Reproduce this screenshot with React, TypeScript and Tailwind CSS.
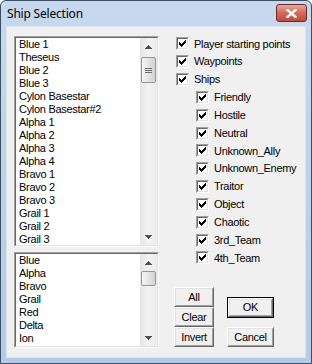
import React from "react";

const topItems = [
  "Blue 1",
  "Theseus",
  "Blue 2",
  "Blue 3",
  "Cylon Basestar",
  "Cylon Basestar#2",
  "Alpha 1",
  "Alpha 2",
  "Alpha 3",
  "Alpha 4",
  "Bravo 1",
  "Bravo 2",
  "Bravo 3",
  "Grail 1",
  "Grail 2",
  "Grail 3",
];

const bottomItems = ["Blue", "Alpha", "Bravo", "Grail", "Red", "Delta", "Ion", "Kilo"];

const teams = [
  "Friendly",
  "Hostile",
  "Neutral",
  "Unknown_Ally",
  "Unknown_Enemy",
  "Traitor",
  "Object",
  "Chaotic",
  "3rd_Team",
  "4th_Team",
];

// 7x7 pixel check, one 3px column per x
const checkCols = [2, 3, 4, 3, 2, 1, 0];

function Arrow({ down }: { down?: boolean }) {
  return (
    <div className="h-[17px] flex items-center justify-center">
      <svg width="7" height="4" viewBox="0 0 7 4" shapeRendering="crispEdges">
        {down ? (
          <polygon points="0,0 7,0 3.5,4" fill="#505050" />
        ) : (
          <polygon points="0,4 7,4 3.5,0" fill="#505050" />
        )}
      </svg>
    </div>
  );
}

function ScrollBar({ thumbTop, thumbHeight, grip }: { thumbTop: number; thumbHeight: number; grip?: boolean }) {
  return (
    <div className="w-[17px] h-full flex flex-col bg-gradient-to-r from-[#e6e6e6] via-[#f2f2f2] to-[#ececec]">
      <Arrow />
      <div
        className="mx-[1px] rounded-[2px] border border-[#979797] bg-gradient-to-r from-[#f6f6f6] via-[#e4e4e4] to-[#d2d2d2] flex flex-col items-center justify-center gap-[1px]"
        style={{ marginTop: thumbTop, height: thumbHeight }}
      >
        {grip && (
          <>
            <div className="w-[7px] h-[1px] bg-[#6e6e6e]" />
            <div className="w-[7px] h-[1px] bg-[#6e6e6e]" />
            <div className="w-[7px] h-[1px] bg-[#6e6e6e]" />
          </>
        )}
      </div>
      <div className="flex-1" />
      <Arrow down />
    </div>
  );
}

function ListBox({
  items,
  height,
  thumbTop,
  thumbHeight,
  grip,
}: {
  items: string[];
  height: number;
  thumbTop: number;
  thumbHeight: number;
  grip?: boolean;
}) {
  return (
    <div
      className="border border-t-[#a0a0a0] border-l-[#a0a0a0] border-b-white border-r-white"
      style={{ height }}
    >
      <div className="h-full border border-t-[#696969] border-l-[#696969] border-b-[#e3e3e3] border-r-[#e3e3e3] bg-white flex">
        <div className="flex-1 overflow-hidden pl-[3px]">
          {items.map((it) => (
            <div key={it} className="h-[13px] leading-[13px] whitespace-nowrap">
              {it}
            </div>
          ))}
        </div>
        <ScrollBar thumbTop={thumbTop} thumbHeight={thumbHeight} grip={grip} />
      </div>
    </div>
  );
}

function CheckBox({ label, indent }: { label: string; indent?: boolean }) {
  return (
    <div className={`h-[17.83px] flex items-center gap-[5px] ${indent ? "pl-[22px]" : "pl-[2px]"}`}>
      <div className="w-[13px] h-[13px] border border-t-[#a0a0a0] border-l-[#a0a0a0] border-b-white border-r-white">
        <div className="w-full h-full border border-t-[#696969] border-l-[#696969] border-b-[#e3e3e3] border-r-[#e3e3e3] bg-white flex items-center justify-center">
          <svg width="7" height="7" viewBox="0 0 7 7" shapeRendering="crispEdges">
            {checkCols.map((y, x) => (
              <rect key={x} x={x} y={y} width="1" height="3" fill="#000" />
            ))}
          </svg>
        </div>
      </div>
      <span className="whitespace-nowrap">{label}</span>
    </div>
  );
}

function Button({ label, w, h, isDefault }: { label: string; w: number; h: number; isDefault?: boolean }) {
  const inner = (
    <div className="h-full border border-t-white border-l-white border-b-[#696969] border-r-[#696969]">
      <div className="h-full border border-t-[#e3e3e3] border-l-[#e3e3e3] border-b-[#a0a0a0] border-r-[#a0a0a0] bg-[#f0f0f0] flex items-center justify-center">
        {label}
      </div>
    </div>
  );
  return (
    <div style={{ width: w, height: h }} className={isDefault ? "border border-black" : ""}>
      {inner}
    </div>
  );
}

export default function App() {
  return (
    <div className="w-[312px] h-[364px] flex flex-col rounded-t-[6px] border border-[#3d4f63] bg-gradient-to-b from-[#c6d9ee] to-[#b3cbe6] overflow-hidden">
      {/* Title bar */}
      <div className="h-[25px] flex items-center pl-[6px] pr-[4px]">
        <span className="flex-1 text-[12px] text-black font-['Noto_Sans',sans-serif] leading-none tracking-[-0.2px] mt-[1px]">
          Ship Selection
        </span>
        <div className="w-[31px] h-[18px] mb-[1px] rounded-[3px] border border-[#6b2a2a] bg-gradient-to-b from-[#e8a898] via-[#d26a58] to-[#c24a3a] flex items-center justify-center">
          <svg width="11" height="9" viewBox="0 0 11 9">
            <path d="M1.5 1 L9.5 8 M9.5 1 L1.5 8" stroke="#fff" strokeWidth="2.4" strokeLinecap="square" />
          </svg>
        </div>
      </div>

      {/* Client area */}
      <div className="flex-1 mx-[5px] mb-[5px] bg-[#f0f0f0] border border-[#dbe4ee] flex pt-[9px] pl-[7px] text-[11px] tracking-[-0.3px] text-black font-['Liberation_Sans',Arial,sans-serif]">
        <div className="w-[145px] flex flex-col gap-[5px]">
          <ListBox items={topItems} height={211} thumbTop={2} thumbHeight={26} grip />
          <ListBox items={bottomItems} height={96} thumbTop={0} thumbHeight={15} />
        </div>

        <div className="ml-[15px] flex flex-col">
          <div className="-mt-[1px]">
            <CheckBox label="Player starting points" />
            <CheckBox label="Waypoints" />
            <CheckBox label="Ships" />
            {teams.map((t) => (
              <CheckBox key={t} label={t} indent />
            ))}
          </div>

          <div className="mt-[20px] flex">
            <div className="flex flex-col">
              <Button label="All" w={40} h={20} />
              <Button label="Clear" w={40} h={20} />
              <Button label="Invert" w={40} h={20} />
            </div>
            <div className="ml-[13px] mt-[10px] flex flex-col gap-[9px]">
              <Button label="OK" w={47} h={21} isDefault />
              <Button label="Cancel" w={47} h={20} />
            </div>
          </div>
        </div>
      </div>
    </div>
  );
}
